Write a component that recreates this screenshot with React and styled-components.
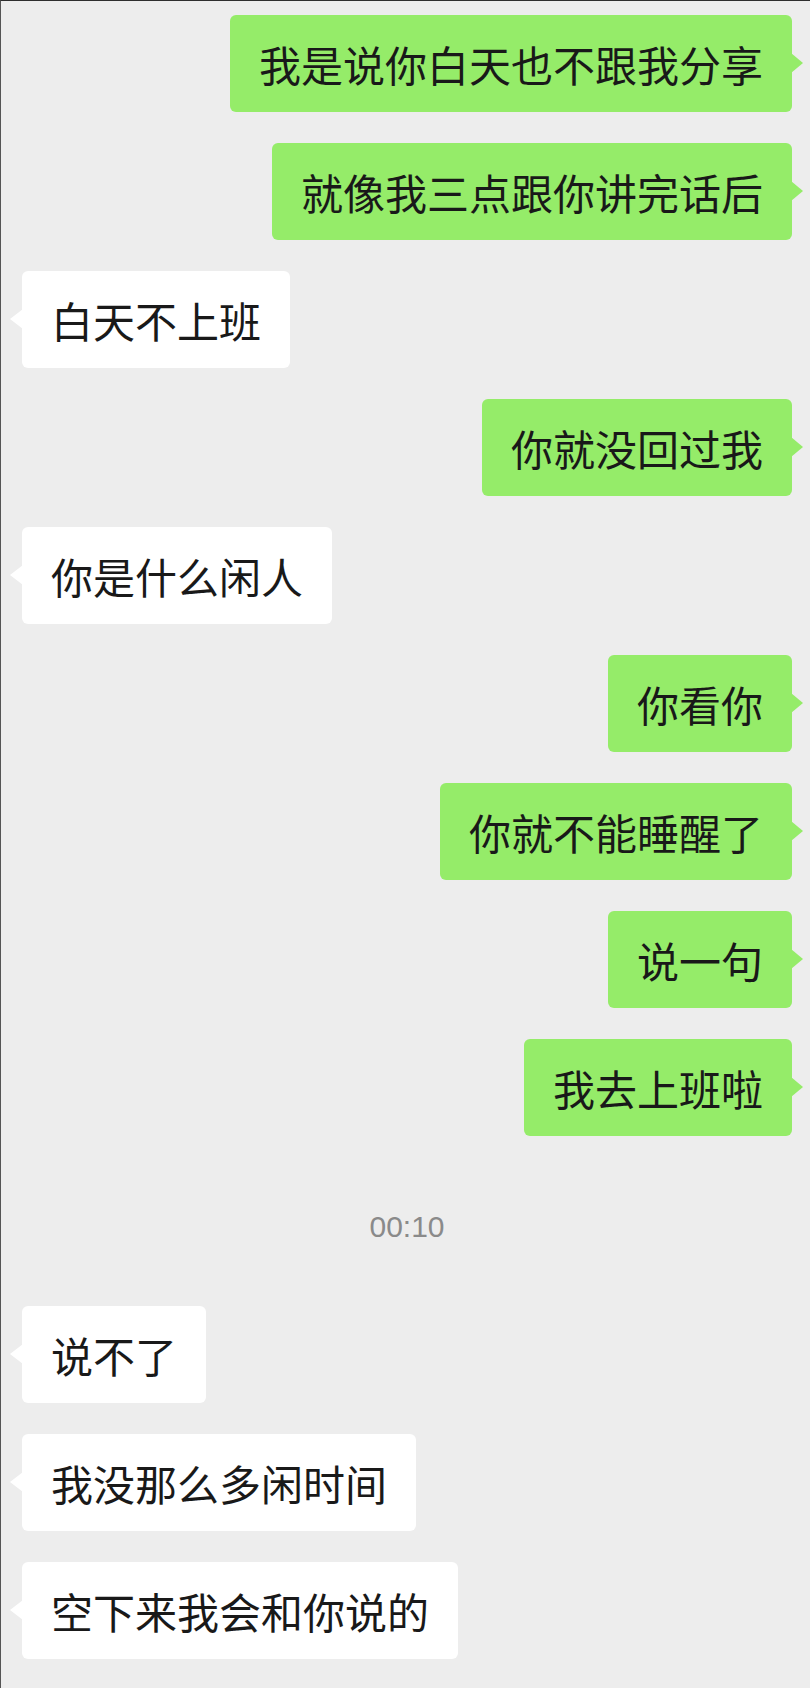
import React from "react";
import styled, {createGlobalStyle} from "styled-components";

const GlobalStyle = createGlobalStyle`
  html, body {
    margin: 0;
    padding: 0;
    background: #ededed;
  }
`;

const Screen = styled.div`
  box-sizing: border-box;
  width: 810px;
  min-height: 1688px;
  background: #ededed;
  border-top: 1px solid #2e2e2e;
  border-left: 1px solid #555;
  padding: 14px 18px 0 21px;
  display: flex;
  flex-direction: column;
  gap: 31px;
  font-family: "Noto Sans CJK SC", "Noto Sans", sans-serif;
`;

const Row = styled.div`
  display: flex;
  justify-content: ${({mine}) => (mine ? "flex-end" : "flex-start")};
`;

const Bubble = styled.div`
  position: relative;
  box-sizing: border-box;
  height: 97px;
  padding: 0 29px;
  line-height: 97px;
  font-size: 42px;
  color: #191919;
  white-space: nowrap;
  border-radius: 6px;
  background: ${({mine}) => (mine ? "#95ec69" : "#ffffff")};

  &::after {
    content: "";
    position: absolute;
    top: 38px;
    width: 0;
    height: 0;
    border-top: 10px solid transparent;
    border-bottom: 10px solid transparent;
    ${({mine}) =>
      mine
        ? "right: -11px; border-left: 12px solid #95ec69;"
        : "left: -12px; border-right: 13px solid #ffffff;"}
  }
`;

const Time = styled.div`
  margin: 40px 0 28px;
  text-align: center;
  line-height: 40px;
  font-family: "Liberation Sans", Arial, sans-serif;
  font-size: 30px;
  color: #8a8a8a;
`;

const messages = [
  {mine: true, text: "我是说你白天也不跟我分享"},
  {mine: true, text: "就像我三点跟你讲完话后"},
  {mine: false, text: "白天不上班"},
  {mine: true, text: "你就没回过我"},
  {mine: false, text: "你是什么闲人"},
  {mine: true, text: "你看你"},
  {mine: true, text: "你就不能睡醒了"},
  {mine: true, text: "说一句"},
  {mine: true, text: "我去上班啦"},
  {time: "00:10"},
  {mine: false, text: "说不了"},
  {mine: false, text: "我没那么多闲时间"},
  {mine: false, text: "空下来我会和你说的"},
];

export default function App() {
  return (
    <>
      <GlobalStyle/>
      <Screen>
        {messages.map((m, i) =>
          m.time
            ? <Time key={i}>{m.time}</Time>
            : (
              <Row key={i} mine={m.mine}>
                <Bubble mine={m.mine}>{m.text}</Bubble>
              </Row>
            )
        )}
      </Screen>
    </>
  );
}
